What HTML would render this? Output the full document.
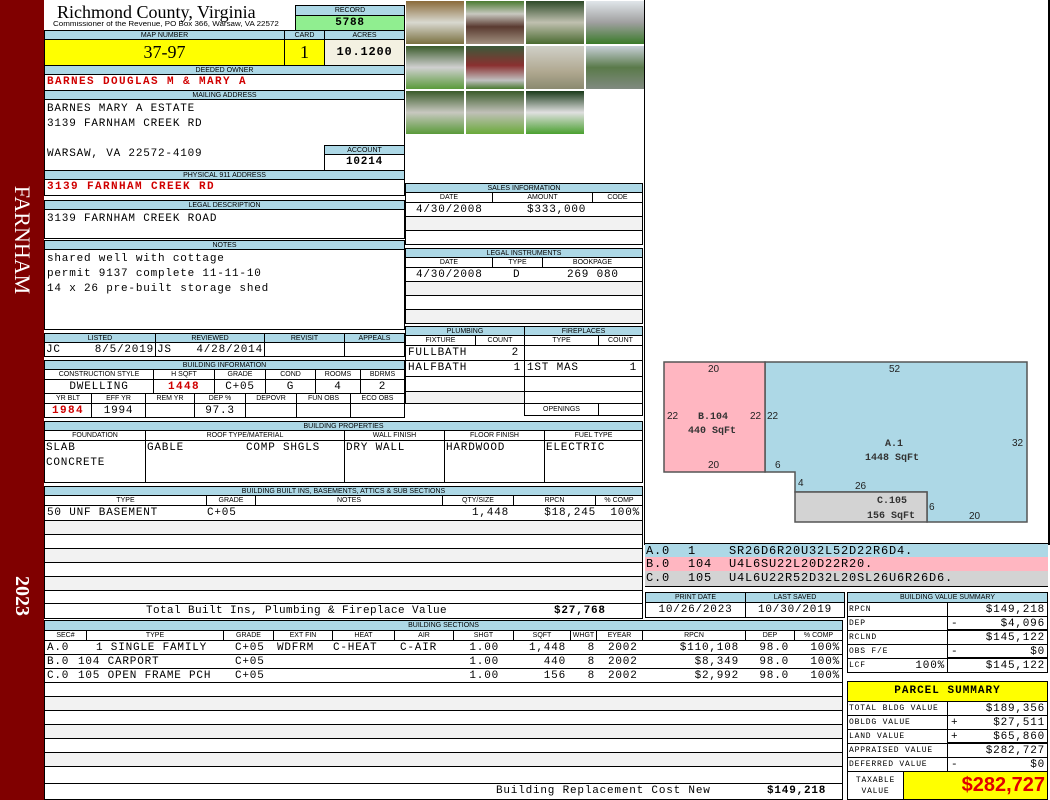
<!DOCTYPE html>
<html><head><meta charset="utf-8"><style>
*{margin:0;padding:0}
body{width:1050px;height:800px;position:relative;background:#fff;overflow:hidden;font-family:"Liberation Sans",sans-serif}
div{position:absolute;box-sizing:border-box;white-space:nowrap;overflow:hidden}
div div{top:0}
.h{background:#add8e6;border:1px solid #000;font:7px/9px "Liberation Sans",sans-serif;text-align:center;color:#000}
.c{border:1px solid #000}
.m{font:11px/14px "Liberation Mono",monospace;color:#000;letter-spacing:0.8px}
.r{color:#d00000;font-weight:bold;letter-spacing:1.4px}
.s{background:#f2f2f2}
.ra{text-align:right}
.ce{text-align:center}
</style></head><body>
<div style="left:0;top:0;width:44px;height:800px;background:#800000"></div>
<div style="left:-38px;top:228px;width:120px;height:24px;transform:rotate(90deg);color:#fff;font:22px/24px 'Liberation Serif',serif;text-align:center">FARNHAM</div>
<div style="left:-18px;top:584px;width:80px;height:24px;transform:rotate(90deg);color:#fff;font:bold 20px/24px 'Liberation Serif',serif;text-align:center">2023</div>

<div style="left:57px;top:2px;font:18px/20px 'Liberation Serif',serif">Richmond County, Virginia</div>
<div style="left:53px;top:20px;font:7px/9px 'Liberation Sans',sans-serif;transform:scaleX(1.14);transform-origin:0 0">Commissioner of the Revenue, PO Box 366, Warsaw, VA 22572</div>
<div class="h" style="left:295px;top:5px;width:110px;height:11px">RECORD</div>
<div class="c m ce" style="left:295px;top:15px;width:110px;height:16px;background:#90ee90;font-weight:bold">5788</div>

<div class="h" style="left:44px;top:30px;width:241px;height:10px">MAP NUMBER</div>
<div class="h" style="left:284px;top:30px;width:41px;height:10px">CARD</div>
<div class="h" style="left:324px;top:30px;width:81px;height:10px">ACRES</div>
<div class="c ce" style="left:44px;top:39px;width:241px;height:27px;background:#ffff00;font:18px/25px 'Liberation Serif',serif">37-97</div>
<div class="c ce" style="left:284px;top:39px;width:41px;height:27px;background:#ffff00;font:18px/25px 'Liberation Serif',serif">1</div>
<div class="c m ce" style="left:324px;top:39px;width:81px;height:27px;background:#f3f1e2;font-weight:bold;font-size:12px;line-height:25px">10.1200</div>

<div class="h" style="left:44px;top:65px;width:361px;height:10px">DEEDED OWNER</div>
<div class="c m r" style="left:44px;top:74px;width:361px;height:17px;padding-left:2px">BARNES DOUGLAS M &amp; MARY A</div>
<div class="h" style="left:44px;top:90px;width:361px;height:10px">MAILING ADDRESS</div>
<div class="c m" style="left:44px;top:99px;width:361px;height:72px;padding:2px 0 0 2px;line-height:15px;white-space:pre">BARNES MARY A ESTATE
3139 FARNHAM CREEK RD

WARSAW, VA 22572-4109</div>
<div class="h" style="left:324px;top:145px;width:81px;height:10px">ACCOUNT</div>
<div class="c m ce" style="left:324px;top:154px;width:81px;height:17px;font-weight:bold">10214</div>
<div class="h" style="left:44px;top:170px;width:361px;height:10px">PHYSICAL 911 ADDRESS</div>
<div class="c m r" style="left:44px;top:179px;width:361px;height:17px;padding-left:2px">3139 FARNHAM CREEK RD</div>

<div class="h" style="left:44px;top:200px;width:361px;height:10px">LEGAL DESCRIPTION</div>
<div class="c m" style="left:44px;top:209px;width:361px;height:30px;padding:2px 0 0 2px">3139 FARNHAM CREEK ROAD</div>
<div class="h" style="left:44px;top:240px;width:361px;height:10px">NOTES</div>
<div class="c m" style="left:44px;top:249px;width:361px;height:81px;padding:2px 0 0 2px;line-height:15px;white-space:pre">shared well with cottage
permit 9137 complete 11-11-10
14 x 26 pre-built storage shed</div>

<div class="h" style="left:44px;top:333px;width:112px;height:10px">LISTED</div>
<div class="h" style="left:155px;top:333px;width:110px;height:10px">REVIEWED</div>
<div class="h" style="left:264px;top:333px;width:81px;height:10px">REVISIT</div>
<div class="h" style="left:344px;top:333px;width:61px;height:10px">APPEALS</div>
<div class="c m" style="left:44px;top:342px;width:112px;height:15px"><div style="left:1px">JC</div><div style="right:1px">8/5/2019</div></div>
<div class="c m" style="left:155px;top:342px;width:110px;height:15px"><div style="left:1px">JS</div><div style="right:1px">4/28/2014</div></div>
<div class="c" style="left:264px;top:342px;width:81px;height:15px"></div>
<div class="c" style="left:344px;top:342px;width:61px;height:15px"></div>

<div class="h" style="left:44px;top:360px;width:361px;height:10px">BUILDING INFORMATION</div>
<div class="c" style="left:44px;top:369px;width:110px;height:11px;font:7px/9px 'Liberation Sans';text-align:center">CONSTRUCTION STYLE</div>
<div class="c" style="left:153px;top:369px;width:62px;height:11px;font:7px/9px 'Liberation Sans';text-align:center">H SQFT</div>
<div class="c" style="left:214px;top:369px;width:52px;height:11px;font:7px/9px 'Liberation Sans';text-align:center">GRADE</div>
<div class="c" style="left:265px;top:369px;width:51px;height:11px;font:7px/9px 'Liberation Sans';text-align:center">COND</div>
<div class="c" style="left:315px;top:369px;width:46px;height:11px;font:7px/9px 'Liberation Sans';text-align:center">ROOMS</div>
<div class="c" style="left:360px;top:369px;width:45px;height:11px;font:7px/9px 'Liberation Sans';text-align:center">BDRMS</div>
<div class="c m ce" style="left:44px;top:379px;width:110px;height:15px">DWELLING</div>
<div class="c m ce r" style="left:153px;top:379px;width:62px;height:15px">1448</div>
<div class="c m ce" style="left:214px;top:379px;width:52px;height:15px">C+05</div>
<div class="c m ce" style="left:265px;top:379px;width:51px;height:15px">G</div>
<div class="c m ce" style="left:315px;top:379px;width:46px;height:15px">4</div>
<div class="c m ce" style="left:360px;top:379px;width:45px;height:15px">2</div>
<div class="h" style="left:44px;top:393px;width:48px;height:11px;background:#fff">YR BLT</div>
<div class="h" style="left:91px;top:393px;width:55px;height:11px;background:#fff">EFF YR</div>
<div class="h" style="left:145px;top:393px;width:50px;height:11px;background:#fff">REM YR</div>
<div class="h" style="left:194px;top:393px;width:52px;height:11px;background:#fff">DEP %</div>
<div class="h" style="left:245px;top:393px;width:52px;height:11px;background:#fff">DEPOVR</div>
<div class="h" style="left:296px;top:393px;width:55px;height:11px;background:#fff">FUN OBS</div>
<div class="h" style="left:350px;top:393px;width:55px;height:11px;background:#fff">ECO OBS</div>
<div class="c m ce r" style="left:44px;top:403px;width:48px;height:15px">1984</div>
<div class="c m ce" style="left:91px;top:403px;width:55px;height:15px">1994</div>
<div class="c" style="left:145px;top:403px;width:50px;height:15px"></div>
<div class="c m ce" style="left:194px;top:403px;width:52px;height:15px">97.3</div>
<div class="c" style="left:245px;top:403px;width:52px;height:15px"></div>
<div class="c" style="left:296px;top:403px;width:55px;height:15px"></div>
<div class="c" style="left:350px;top:403px;width:55px;height:15px"></div>

<div class="h" style="left:44px;top:421px;width:599px;height:10px">BUILDING PROPERTIES</div>
<div class="h" style="left:44px;top:430px;width:102px;height:11px;background:#fff">FOUNDATION</div>
<div class="h" style="left:145px;top:430px;width:200px;height:11px;background:#fff">ROOF TYPE/MATERIAL</div>
<div class="h" style="left:344px;top:430px;width:101px;height:11px;background:#fff">WALL FINISH</div>
<div class="h" style="left:444px;top:430px;width:101px;height:11px;background:#fff">FLOOR FINISH</div>
<div class="h" style="left:544px;top:430px;width:99px;height:11px;background:#fff">FUEL TYPE</div>
<div class="c m" style="left:44px;top:440px;width:102px;height:43px;white-space:pre;padding-left:1px;line-height:15px">SLAB
CONCRETE</div>
<div class="c m" style="left:145px;top:440px;width:200px;height:43px;padding-left:1px;line-height:15px">GABLE<div style="left:100px">COMP SHGLS</div></div>
<div class="c m" style="left:344px;top:440px;width:101px;height:43px;padding-left:1px;line-height:15px">DRY WALL</div>
<div class="c m" style="left:444px;top:440px;width:101px;height:43px;padding-left:1px;line-height:15px">HARDWOOD</div>
<div class="c m" style="left:544px;top:440px;width:99px;height:43px;padding-left:1px;line-height:15px">ELECTRIC</div>

<div class="h" style="left:44px;top:486px;width:599px;height:10px">BUILDING BUILT INS, BASEMENTS, ATTICS &amp; SUB SECTIONS</div>
<div class="h" style="left:44px;top:495px;width:163px;height:11px;background:#fff">TYPE</div>
<div class="h" style="left:206px;top:495px;width:50px;height:11px;background:#fff">GRADE</div>
<div class="h" style="left:255px;top:495px;width:188px;height:11px;background:#fff">NOTES</div>
<div class="h" style="left:442px;top:495px;width:72px;height:11px;background:#fff">QTY/SIZE</div>
<div class="h" style="left:513px;top:495px;width:83px;height:11px;background:#fff">RPCN</div>
<div class="h" style="left:595px;top:495px;width:48px;height:11px;background:#fff">% COMP</div>
<div class="c m" style="left:44px;top:505px;width:599px;height:16px"><div style="left:2px">50 UNF BASEMENT</div><div style="left:162px">C+05</div><div style="right:133px">1,448</div><div style="right:46px">$18,245</div><div style="right:2px">100%</div></div>
<div class="c s" style="left:44px;top:520px;width:599px;height:15px"></div>
<div class="c" style="left:44px;top:534px;width:599px;height:15px"></div>
<div class="c s" style="left:44px;top:548px;width:599px;height:15px"></div>
<div class="c" style="left:44px;top:562px;width:599px;height:15px"></div>
<div class="c s" style="left:44px;top:576px;width:599px;height:15px"></div>
<div class="c" style="left:44px;top:590px;width:599px;height:14px"></div>
<div class="c m" style="left:44px;top:603px;width:599px;height:16px"><div style="left:101px;letter-spacing:0.4px">Total Built Ins, Plumbing &amp; Fireplace Value</div><div style="left:509px;font-weight:bold">$27,768</div></div>

<!-- photos -->
<div style="left:405px;top:0;width:240px;height:180px;background:#fff;border-right:1px solid #000"></div>
<div style="left:406px;top:1px;width:58px;height:43px;background:linear-gradient(#8a6a3a,#d9d9d0 50%,#7a7040)"></div>
<div style="left:466px;top:1px;width:58px;height:43px;background:linear-gradient(#4a7a30,#c8c8c0 30%,#5a3a30 60%,#a09080)"></div>
<div style="left:526px;top:1px;width:58px;height:43px;background:linear-gradient(#2e4a28,#c0c0b0 50%,#4a6a30)"></div>
<div style="left:586px;top:1px;width:58px;height:43px;background:linear-gradient(#e0e6ea,#a0a0a0 50%,#3a7a2a)"></div>
<div style="left:406px;top:46px;width:58px;height:43px;background:linear-gradient(#3a5a2a,#d0d0d0 50%,#5a9a3a)"></div>
<div style="left:466px;top:46px;width:58px;height:43px;background:linear-gradient(#3a5a3a,#8a3030 45%,#c0c0c0 80%,#4a7a30)"></div>
<div style="left:526px;top:46px;width:58px;height:43px;background:linear-gradient(#d0d0c8,#b0a890 60%,#8a8a70)"></div>
<div style="left:586px;top:46px;width:58px;height:43px;background:linear-gradient(#c8d0d8,#5a7a4a 50%,#808a80)"></div>
<div style="left:406px;top:91px;width:58px;height:43px;background:linear-gradient(#3a5a2a,#c8c8c0 50%,#5a9a3a)"></div>
<div style="left:466px;top:91px;width:58px;height:43px;background:linear-gradient(#3a5a2a,#c0c0b8 50%,#6aaa3a)"></div>
<div style="left:526px;top:91px;width:58px;height:43px;background:linear-gradient(#1a3a1a,#e0e0e0 50%,#4aa030)"></div>

<!-- sales -->
<div class="h" style="left:405px;top:183px;width:238px;height:10px">SALES INFORMATION</div>
<div class="h" style="left:405px;top:192px;width:88px;height:11px;background:#fff">DATE</div>
<div class="h" style="left:492px;top:192px;width:101px;height:11px;background:#fff">AMOUNT</div>
<div class="h" style="left:592px;top:192px;width:51px;height:11px;background:#fff">CODE</div>
<div class="c m" style="left:405px;top:202px;width:238px;height:15px"><div style="left:10px">4/30/2008</div><div style="left:121px">$333,000</div></div>
<div class="c s" style="left:405px;top:216px;width:238px;height:15px"></div>
<div class="c" style="left:405px;top:230px;width:238px;height:15px"></div>
<div class="h" style="left:405px;top:248px;width:238px;height:10px">LEGAL INSTRUMENTS</div>
<div class="h" style="left:405px;top:257px;width:88px;height:11px;background:#fff">DATE</div>
<div class="h" style="left:492px;top:257px;width:51px;height:11px;background:#fff">TYPE</div>
<div class="h" style="left:542px;top:257px;width:101px;height:11px;background:#fff">BOOKPAGE</div>
<div class="c m" style="left:405px;top:267px;width:238px;height:15px"><div style="left:10px">4/30/2008</div><div style="left:107px">D</div><div style="left:161px">269 080</div></div>
<div class="c s" style="left:405px;top:281px;width:238px;height:15px"></div>
<div class="c" style="left:405px;top:295px;width:238px;height:15px"></div>
<div class="c s" style="left:405px;top:309px;width:238px;height:15px"></div>

<div class="h" style="left:405px;top:326px;width:120px;height:10px">PLUMBING</div>
<div class="h" style="left:524px;top:326px;width:119px;height:10px">FIREPLACES</div>
<div class="h" style="left:405px;top:335px;width:71px;height:11px;background:#fff">FIXTURE</div>
<div class="h" style="left:475px;top:335px;width:50px;height:11px;background:#fff">COUNT</div>
<div class="h" style="left:524px;top:335px;width:75px;height:11px;background:#fff">TYPE</div>
<div class="h" style="left:598px;top:335px;width:45px;height:11px;background:#fff">COUNT</div>
<div class="c m" style="left:405px;top:345px;width:120px;height:16px"><div style="left:2px">FULLBATH</div><div style="right:5px">2</div></div>
<div class="c" style="left:524px;top:345px;width:119px;height:16px"></div>
<div class="c m" style="left:405px;top:360px;width:120px;height:17px"><div style="left:2px">HALFBATH</div><div style="right:3px">1</div></div>
<div class="c m" style="left:524px;top:360px;width:119px;height:17px"><div style="left:2px">1ST MAS</div><div style="right:5px">1</div></div>
<div class="c" style="left:405px;top:376px;width:120px;height:16px"></div>
<div class="c" style="left:524px;top:376px;width:119px;height:16px"></div>
<div class="c s" style="left:405px;top:391px;width:120px;height:13px"></div>
<div class="c" style="left:524px;top:391px;width:119px;height:13px"></div>
<div class="c" style="left:524px;top:403px;width:75px;height:13px;font:7px/11px 'Liberation Sans';text-align:center">OPENINGS</div>
<div class="c" style="left:598px;top:403px;width:45px;height:13px"></div>

<!-- sketch -->
<div style="left:644px;top:0;width:406px;height:545px;border-left:1px solid #000;border-right:2px solid #000"></div>
<svg style="position:absolute;left:0;top:0" width="1050" height="545">
<polygon points="765,362 1027,362 1027,522 927,522 927,492 795,492 795,472 765,472" fill="#add8e6" stroke="#555" stroke-width="1.5"/>
<rect x="664" y="362" width="101" height="110" fill="#ffb6c1" stroke="#555" stroke-width="1.5"/>
<rect x="795" y="492" width="132" height="30" fill="#d3d3d3" stroke="#555" stroke-width="1.5"/>
<g font-family="Liberation Sans" font-size="10" fill="#222">
<text x="708" y="372">20</text><text x="889" y="372">52</text>
<text x="667" y="419">22</text><text x="750" y="419">22</text><text x="767" y="419">22</text>
<text x="1012" y="446">32</text><text x="708" y="468">20</text><text x="775" y="468">6</text>
<text x="798" y="486">4</text><text x="855" y="489">26</text><text x="929" y="510">6</text><text x="969" y="519">20</text>
</g>
<g font-family="Liberation Mono" font-size="10" font-weight="bold" fill="#333">
<text x="698" y="419">B.104</text><text x="688" y="433">440 SqFt</text>
<text x="885" y="446">A.1</text><text x="865" y="460">1448 SqFt</text>
<text x="877" y="503">C.105</text><text x="867" y="518">156 SqFt</text>
</g></svg>
<div class="m" style="left:645px;top:543px;width:403px;height:15px;background:#add8e6;border-top:1px solid #000;font-size:12px"><div style="left:1px">A.0</div><div style="left:43px">1</div><div style="left:84px">SR26D6R20U32L52D22R6D4.</div></div>
<div class="m" style="left:645px;top:557px;width:403px;height:15px;background:#ffb6c1;font-size:12px"><div style="left:1px">B.0</div><div style="left:43px">104</div><div style="left:84px">U4L6SU22L20D22R20.</div></div>
<div class="m" style="left:645px;top:571px;width:403px;height:16px;background:#d3d3d3;border-bottom:1px solid #000;font-size:12px"><div style="left:1px">C.0</div><div style="left:43px">105</div><div style="left:84px">U4L6U22R52D32L20SL26U6R26D6.</div></div>

<div class="h" style="left:645px;top:592px;width:101px;height:11px">PRINT DATE</div>
<div class="h" style="left:745px;top:592px;width:100px;height:11px">LAST SAVED</div>
<div class="c m ce" style="left:645px;top:602px;width:101px;height:16px">10/26/2023</div>
<div class="c m ce" style="left:745px;top:602px;width:100px;height:16px">10/30/2019</div>

<!-- building value summary -->
<div class="h" style="left:847px;top:592px;width:201px;height:11px">BUILDING VALUE SUMMARY</div>
<div class="c m" style="left:847px;top:602px;width:101px;height:15px;font-size:8px;padding-left:1px">RPCN</div>
<div class="c m ra" style="left:947px;top:602px;width:101px;height:15px;padding-right:2px">$149,218</div>
<div class="c m" style="left:847px;top:616px;width:101px;height:15px;font-size:8px;padding-left:1px">DEP</div>
<div class="c m" style="left:947px;top:616px;width:101px;height:15px;border-bottom:2px solid #000"><div style="left:3px">-</div><div style="right:2px">$4,096</div></div>
<div class="c m" style="left:847px;top:630px;width:101px;height:15px;font-size:8px;padding-left:1px">RCLND</div>
<div class="c m ra" style="left:947px;top:630px;width:101px;height:15px;padding-right:2px">$145,122</div>
<div class="c m" style="left:847px;top:644px;width:101px;height:15px;font-size:8px;padding-left:1px">OBS F/E</div>
<div class="c m" style="left:947px;top:644px;width:101px;height:15px;border-bottom:2px solid #000"><div style="left:3px">-</div><div style="right:2px">$0</div></div>
<div class="c m" style="left:847px;top:658px;width:101px;height:15px;font-size:8px;padding-left:1px">LCF<div style="right:2px;font-size:11px">100%</div></div>
<div class="c m ra" style="left:947px;top:658px;width:101px;height:15px;padding-right:2px">$145,122</div>

<!-- parcel summary -->
<div class="c" style="left:847px;top:681px;width:201px;height:21px;background:#ffff00;font:bold 11px/19px 'Liberation Mono',monospace;text-align:center;letter-spacing:1px">PARCEL SUMMARY</div>
<div class="c m" style="left:847px;top:701px;width:101px;height:15px;font-size:8px;padding-left:1px">TOTAL BLDG VALUE</div>
<div class="c m ra" style="left:947px;top:701px;width:101px;height:15px;padding-right:2px">$189,356</div>
<div class="c m" style="left:847px;top:715px;width:101px;height:15px;font-size:8px;padding-left:1px">OBLDG VALUE</div>
<div class="c m" style="left:947px;top:715px;width:101px;height:15px"><div style="left:3px">+</div><div style="right:2px">$27,511</div></div>
<div class="c m" style="left:847px;top:729px;width:101px;height:15px;font-size:8px;padding-left:1px">LAND VALUE</div>
<div class="c m" style="left:947px;top:729px;width:101px;height:15px;border-bottom:2px solid #000"><div style="left:3px">+</div><div style="right:2px">$65,860</div></div>
<div class="c m" style="left:847px;top:743px;width:101px;height:15px;font-size:8px;padding-left:1px">APPRAISED VALUE</div>
<div class="c m ra" style="left:947px;top:743px;width:101px;height:15px;padding-right:2px">$282,727</div>
<div class="c m" style="left:847px;top:757px;width:101px;height:15px;font-size:8px;padding-left:1px">DEFERRED VALUE</div>
<div class="c m" style="left:947px;top:757px;width:101px;height:15px"><div style="left:3px">-</div><div style="right:2px">$0</div></div>
<div class="c m" style="left:847px;top:771px;width:57px;height:29px;font-size:8px;line-height:11px;text-align:center;padding-top:3px;white-space:pre">TAXABLE
VALUE</div>
<div class="c ra" style="left:903px;top:771px;width:145px;height:29px;background:#ffff00;color:#e00000;font:bold 20px/27px 'Liberation Sans',sans-serif;padding-right:2px">$282,727</div>

<!-- building sections -->
<div class="h" style="left:44px;top:620px;width:799px;height:11px">BUILDING SECTIONS</div>
<div class="h" style="left:44px;top:630px;width:43px;height:11px;background:#fff">SEC#</div>
<div class="h" style="left:86px;top:630px;width:138px;height:11px;background:#fff">TYPE</div>
<div class="h" style="left:223px;top:630px;width:51px;height:11px;background:#fff">GRADE</div>
<div class="h" style="left:273px;top:630px;width:60px;height:11px;background:#fff">EXT FIN</div>
<div class="h" style="left:332px;top:630px;width:63px;height:11px;background:#fff">HEAT</div>
<div class="h" style="left:394px;top:630px;width:60px;height:11px;background:#fff">AIR</div>
<div class="h" style="left:453px;top:630px;width:61px;height:11px;background:#fff">SHGT</div>
<div class="h" style="left:513px;top:630px;width:58px;height:11px;background:#fff">SQFT</div>
<div class="h" style="left:570px;top:630px;width:27px;height:11px;background:#fff">WHGT</div>
<div class="h" style="left:596px;top:630px;width:47px;height:11px;background:#fff">EYEAR</div>
<div class="h" style="left:642px;top:630px;width:104px;height:11px;background:#fff">RPCN</div>
<div class="h" style="left:745px;top:630px;width:50px;height:11px;background:#fff">DEP</div>
<div class="h" style="left:794px;top:630px;width:49px;height:11px;background:#fff">% COMP</div>
<div class="c m" style="left:44px;top:640px;width:799px;height:15px"><div style="left:2px">A.0</div><div style="left:51px">1 SINGLE FAMILY</div><div style="left:190px">C+05</div><div style="left:232px">WDFRM</div><div style="left:288px">C-HEAT</div><div style="left:355px">C-AIR</div><div style="right:343px">1.00</div><div style="right:276px">1,448</div><div style="right:247px">8</div><div style="left:563px">2002</div><div style="right:103px">$110,108</div><div style="right:53px">98.0</div><div style="right:2px">100%</div></div>
<div class="c m" style="left:44px;top:654px;width:799px;height:15px"><div style="left:2px">B.0</div><div style="left:33px">104 CARPORT</div><div style="left:190px">C+05</div><div style="right:343px">1.00</div><div style="right:276px">440</div><div style="right:247px">8</div><div style="left:563px">2002</div><div style="right:103px">$8,349</div><div style="right:53px">98.0</div><div style="right:2px">100%</div></div>
<div class="c m" style="left:44px;top:668px;width:799px;height:15px"><div style="left:2px">C.0</div><div style="left:33px">105 OPEN FRAME PCH</div><div style="left:190px">C+05</div><div style="right:343px">1.00</div><div style="right:276px">156</div><div style="right:247px">8</div><div style="left:563px">2002</div><div style="right:103px">$2,992</div><div style="right:53px">98.0</div><div style="right:2px">100%</div></div>
<div class="c" style="left:44px;top:682px;width:799px;height:15px"></div>
<div class="c s" style="left:44px;top:696px;width:799px;height:15px"></div>
<div class="c" style="left:44px;top:710px;width:799px;height:15px"></div>
<div class="c s" style="left:44px;top:724px;width:799px;height:15px"></div>
<div class="c" style="left:44px;top:738px;width:799px;height:15px"></div>
<div class="c s" style="left:44px;top:752px;width:799px;height:15px"></div>
<div class="c" style="left:44px;top:766px;width:799px;height:18px"></div>
<div class="c m" style="left:44px;top:783px;width:799px;height:17px"><div style="left:451px">Building Replacement Cost New</div><div style="left:722px;font-weight:bold">$149,218</div></div>
</body></html>
